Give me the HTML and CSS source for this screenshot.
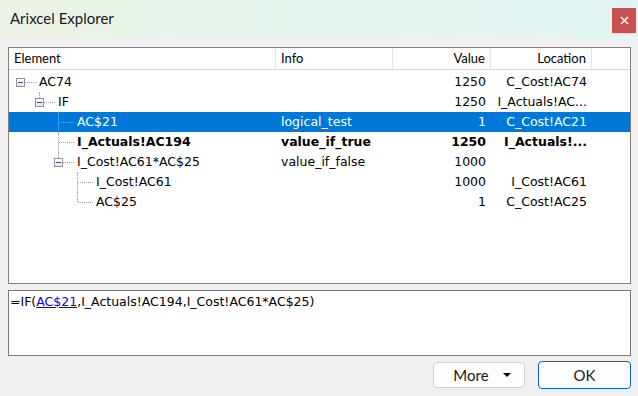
FILE: index.html
```html
<!DOCTYPE html>
<html>

<head>
  <title>Arixcel Explorer</title>
  <link rel="stylesheet" href="styles.css">
</head>

<body>
  <div class="window">
    <div class="titlebar">
      <span class="title">Arixcel Explorer</span>
      <button class="close" type="button">
        <svg width="9" height="9" viewBox="0 0 9 9"><path d="M1 1L8 8M8 1L1 8" stroke="#fff" stroke-width="1.6"/></svg>
      </button>
    </div>

    <div class="content">
      <div class="tree">
        <div class="row head">
          <div class="c el">Element</div>
          <div class="c info">Info</div>
          <div class="c val">Value</div>
          <div class="c loc">Location</div>
          <div class="c rest"></div>
        </div>

        <div class="row">
          <div class="c el"><span class="k box"><i></i></span><span>AC74</span></div>
          <div class="c info"></div>
          <div class="c val">1250</div>
          <div class="c loc">C_Cost!AC74</div>
        </div>
        <div class="row">
          <div class="c el"><span class="g"></span><span class="k box up"><i></i></span><span>IF</span></div>
          <div class="c info"></div>
          <div class="c val">1250</div>
          <div class="c loc">I_Actuals!AC...</div>
        </div>
        <div class="row selected">
          <div class="c el"><span class="g"></span><span class="g"></span><span class="k tee"></span><span>AC$21</span></div>
          <div class="c info">logical_test</div>
          <div class="c val">1</div>
          <div class="c loc">C_Cost!AC21</div>
        </div>
        <div class="row bold">
          <div class="c el"><span class="g"></span><span class="g"></span><span class="k tee"></span><span>I_Actuals!AC194</span></div>
          <div class="c info">value_if_true</div>
          <div class="c val">1250</div>
          <div class="c loc">I_Actuals!...</div>
        </div>
        <div class="row">
          <div class="c el"><span class="g"></span><span class="g"></span><span class="k box up"><i></i></span><span>I_Cost!AC61*AC$25</span></div>
          <div class="c info">value_if_false</div>
          <div class="c val">1000</div>
          <div class="c loc"></div>
        </div>
        <div class="row">
          <div class="c el"><span class="g"></span><span class="g"></span><span class="g"></span><span class="k tee"></span><span>I_Cost!AC61</span></div>
          <div class="c info"></div>
          <div class="c val">1000</div>
          <div class="c loc">I_Cost!AC61</div>
        </div>
        <div class="row">
          <div class="c el"><span class="g"></span><span class="g"></span><span class="g"></span><span class="k end"></span><span>AC$25</span></div>
          <div class="c info"></div>
          <div class="c val">1</div>
          <div class="c loc">C_Cost!AC25</div>
        </div>
      </div>

      <div class="formula">=IF(<a href="#">AC$21</a>,I_Actuals!AC194,I_Cost!AC61*AC$25)</div>

      <div class="buttons">
        <button type="button" class="btn more">More <span class="arrow"></span></button>
        <button type="button" class="btn ok">OK</button>
      </div>
    </div>
  </div>
</body>

</html>
```

FILE: styles.css
```css
body {
  margin: 0;
  background-color: #f0f0f0;
  font-family: "DejaVu Sans", sans-serif;
  font-size: 12.5px;
}

.window {
  width: 638px;
  height: 396px;
  display: flex;
  flex-direction: column;
  background-color: #f0f0f0;
}

.titlebar {
  height: 37px;
  display: flex;
  align-items: flex-start;
  background: linear-gradient(90deg, #ebf3e5, #e1f5f6);
}

.title {
  flex: 1;
  padding-left: 10px;
  line-height: 37px;
  font-family: Lato, sans-serif;
  font-size: 15px;
  color: #1a1a1a;
}

.close {
  width: 24px;
  height: 25px;
  margin: 8px 2px 0 0;
  padding: 0;
  border: none;
  background-color: #c75050;
  display: flex;
  align-items: center;
  justify-content: center;
}

.content {
  padding: 10px 7px 0 8px;
}

.tree {
  width: 621px;
  height: 235px;
  background: #fff;
  border: 1px solid #828282;
}

.row {
  display: grid;
  grid-template-columns: 267px 117px 98px 101px 1fr;
  height: 20px;
  line-height: 20px;
  color: #000;
  white-space: nowrap;
}

.row.head {
  height: 21px;
  line-height: 21px;
  border-bottom: 1px solid #d5d5d5;
  margin-bottom: 2px;
  font-family: Lato, sans-serif;
  font-size: 13px;
}

.row.head .c {
  border-right: 1px solid #e5e5e5;
}

.row.head .rest {
  border-right: none;
}

.row.selected {
  background-color: #0078d7;
  color: #fff;
}

.row.bold {
  font-weight: bold;
}

.c {
  overflow: hidden;
}

.el {
  display: flex;
  padding-left: 2px;
}

.head .el {
  padding-left: 5px;
}

.info {
  padding-left: 5px;
}

.val {
  text-align: right;
  padding-right: 5px;
}

.loc {
  text-align: right;
  padding-right: 5px;
}

/* tree guides */
.g,
.k {
  flex: none;
  position: relative;
  height: 20px;
}

.g {
  width: 19px;
}

.k {
  width: 28px;
}

.k::after {
  content: "";
  position: absolute;
  left: 10px;
  width: 15px;
  top: 10px;
  border-top: 1px dotted #a0a0a0;
}

.k.tee::before,
.k.end::before,
.k.up::before {
  content: "";
  position: absolute;
  left: 9px;
  top: 0;
  height: 20px;
  border-left: 1px dotted #a0a0a0;
}

.k.end::before {
  height: 10px;
}

.k.up::before {
  height: 6px;
}

.k.box::after {
  left: 14px;
  width: 11px;
}

.k.box i {
  position: absolute;
  left: 5px;
  top: 6px;
  width: 7px;
  height: 7px;
  border: 1px solid #919191;
  background: linear-gradient(#fff, #e6e6e6);
}

.k.box i::after {
  content: "";
  position: absolute;
  left: 1px;
  top: 3px;
  width: 5px;
  height: 1px;
  background-color: #34487a;
}

.formula {
  width: 620px;
  height: 62px;
  margin-top: 6px;
  padding: 2px 0 0 1px;
  background: #fff;
  border: 1px solid #7a7a7a;
  line-height: 17px;
}

.formula a {
  color: #0000ff;
}

.buttons {
  display: flex;
  justify-content: flex-end;
  gap: 13px;
  margin-top: 5px;
  padding-right: 0;
}

.btn {
  font-family: Lato, sans-serif;
  font-size: 15px;
  color: #1a1a1a;
  background-color: #fdfdfd;
  border-radius: 4px;
  padding: 0;
}

.btn.more {
  width: 92px;
  height: 26px;
  margin-top: 1px;
  border: 1px solid #d0d0d0;
  display: flex;
  align-items: center;
  justify-content: center;
  gap: 14px;
  padding-left: 6px;
}

.arrow {
  width: 0;
  height: 0;
  border-left: 4px solid transparent;
  border-right: 4px solid transparent;
  border-top: 4px solid #000;
}

.btn.ok {
  width: 93px;
  height: 28px;
  border: 1px solid #0067c0;
}
```
